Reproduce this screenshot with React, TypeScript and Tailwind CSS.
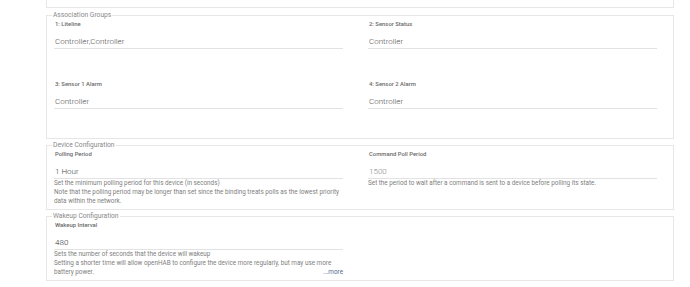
import React from "react";

const font = { fontFamily: "Roboto, 'Noto Sans', sans-serif" };

function Field({
  label,
  value,
  valueClass = "text-[#505050]",
  desc,
  more,
}: {
  label: string;
  value: string;
  valueClass?: string;
  desc?: string[];
  more?: boolean;
}) {
  return (
    <div className="flex flex-col">
      <div className="pl-[1px] text-[5.9px] leading-[9px] font-medium text-[#6a6a6a]">{label}</div>
      <div
        className={`mt-[6px] pl-[1px] text-[8px] leading-[13px] font-light border-b border-[#e2e2e2] ${valueClass}`}
      >
        {value}
      </div>
      {desc && (
        <div className="text-[6.35px] leading-[9px] text-[#808080]">
          {desc.map((d, i) =>
            more && i === desc.length - 1 ? (
              <div key={i} className="flex justify-between">
                <span>{d}</span>
                <span className="text-[#5a6690]">...more</span>
              </div>
            ) : (
              <div key={i} className="whitespace-nowrap">{d}</div>
            )
          )}
        </div>
      )}
    </div>
  );
}

function Legend({ children }: { children: React.ReactNode }) {
  return (
    <legend className="ml-[5px] px-[1px] text-[6.7px] leading-[10px] text-[#8a8a8a]">{children}</legend>
  );
}

export default function App() {
  return (
    <div className="w-[690px] h-[287px] bg-white overflow-hidden" style={font}>
      <div className="ml-[46px] w-[628px]">
        <div className="h-[8px] border-x border-b border-[#e6e6e6]" />

        <fieldset className="mt-[2px] border border-[#e6e6e6] pb-[29px]">
          <Legend>Association Groups</Legend>
          <div className="pl-[7px] grid grid-cols-[289px_289px] gap-x-[25px] gap-y-[31px]">
            <Field label="1: Liteline" value="Controller,Controller" />
            <Field label="2: Sensor Status" value="Controller" />
            <Field label="3: Sensor 1 Alarm" value="Controller" />
            <Field label="4: Sensor 2 Alarm" value="Controller" />
          </div>
        </fieldset>

        <fieldset className="mt-[1px] border border-[#e6e6e6] pb-[3px]">
          <Legend>Device Configuration</Legend>
          <div className="pl-[7px] grid grid-cols-[289px_289px] gap-x-[25px]">
            <Field
              label="Polling Period"
              value="1 Hour"
              valueClass="text-[#444]"
              desc={[
                "Set the minimum polling period for this device (in seconds)",
                "Note that the polling period may be longer than set since the binding treats polls as the lowest priority",
                "data within the network.",
              ]}
            />
            <Field
              label="Command Poll Period"
              value="1500"
              valueClass="text-[#888]"
              desc={["Set the period to wait after a command is sent to a device before polling its state."]}
            />
          </div>
        </fieldset>

        <fieldset className="mt-[1px] border border-[#e6e6e6] pb-[3px]">
          <Legend>Wakeup Configuration</Legend>
          <div className="pl-[7px] grid grid-cols-[289px_289px] gap-x-[25px]">
            <Field
              label="Wakeup Interval"
              value="480"
              valueClass="text-[#333]"
              more
              desc={[
                "Sets the number of seconds that the device will wakeup",
                "Setting a shorter time will allow openHAB to configure the device more regularly, but may use more",
                "battery power.",
              ]}
            />
            <div />
          </div>
        </fieldset>
      </div>
    </div>
  );
}
